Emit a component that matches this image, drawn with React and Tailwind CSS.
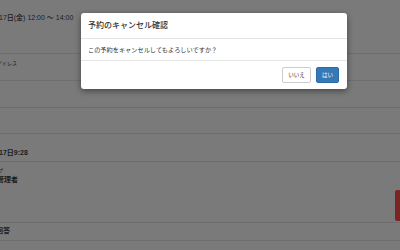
export default function App() {
  return (
    <div className="relative w-[400px] h-[250px] overflow-hidden bg-[#7a7a7a] text-[#1c1c1c] font-['Liberation_Sans','Noto_Sans_CJK_JP',sans-serif]">
      <div className="flex flex-col">
        <div className="h-[54px] border-b border-[#6e6e6e] pt-[13px]">
          <div className="-ml-[1px] text-[7px] leading-[9px] font-medium whitespace-nowrap">17日(金) 12:00 〜 14:00</div>
        </div>
        <div className="h-[27px] border-b border-[#6e6e6e] pt-[6px]">
          <div className="-ml-[3px] text-[5px] leading-[6px] whitespace-nowrap">アドレス</div>
        </div>
        <div className="h-[27px] border-b border-[#6e6e6e]" />
        <div className="h-[26px] border-b border-[#6e6e6e]" />
        <div className="h-[28px] border-b border-[#6e6e6e] pt-[15px]">
          <div className="-ml-[1px] text-[7px] leading-[8px] font-bold whitespace-nowrap">17日9:28</div>
        </div>
        <div className="h-[61px] border-b border-[#6e6e6e] pt-[5px] flex flex-col gap-[3px]">
          <div className="-ml-[2px] text-[5px] leading-[6px] whitespace-nowrap">プ</div>
          <div className="-ml-[3px] text-[7px] leading-[8px] font-bold whitespace-nowrap">管理者</div>
        </div>
        <div className="h-[18px] border-b border-[#6e6e6e] pt-[4px]">
          <div className="-ml-[4px] text-[7px] leading-[8px] font-bold whitespace-nowrap">回答</div>
        </div>
        <div className="h-[20px]" />
      </div>

      <div className="absolute right-0 top-[190px] w-[5px] h-[31px] rounded-l-[2px] bg-[#7b2424]" />

      <div className="absolute left-[81px] top-[13px] w-[266px] h-[76px] bg-white rounded-[3px] shadow-[0_2px_6px_rgba(0,0,0,0.45)] flex flex-col text-[#333]">
        <div className="h-[26px] border-b border-[#e5e5e5] px-[7px] flex items-center">
          <span className="text-[8px] leading-[10px] font-medium whitespace-nowrap">予約のキャンセル確認</span>
        </div>
        <div className="h-[22px] border-b border-[#e5e5e5] px-[7px] flex items-center">
          <span className="text-[6.2px] leading-[8px] whitespace-nowrap">この予約をキャンセルしてもよろしいですか？</span>
        </div>
        <div className="flex-1 flex items-center justify-end gap-[5px] pr-[8px]">
          <div className="w-[29px] h-[16px] rounded-[2px] border border-[#cccccc] bg-white flex items-center justify-center text-[5.5px] leading-[6px] text-[#333]">いいえ</div>
          <div className="w-[23px] h-[16px] rounded-[2px] border border-[#2e6da4] bg-[#337ab7] flex items-center justify-center text-[5.5px] leading-[6px] text-white">はい</div>
        </div>
      </div>
    </div>
  );
}
